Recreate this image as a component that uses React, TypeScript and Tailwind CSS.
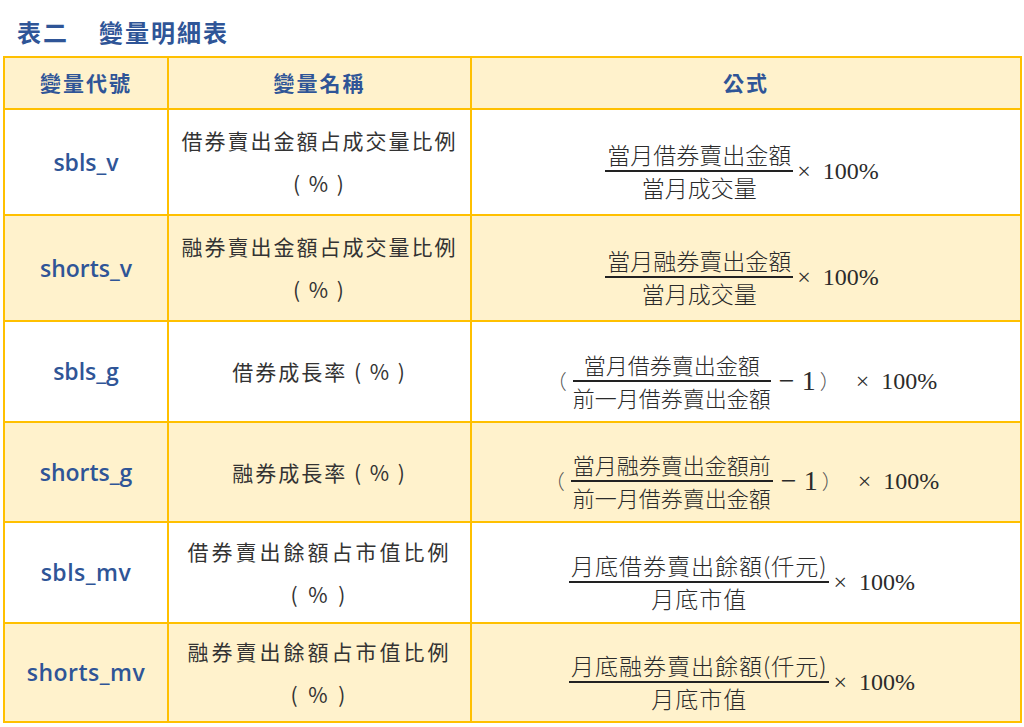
const CJK = "font-['Noto_Sans_CJK_TC','Noto_Sans',sans-serif]";
const SERIF = "font-['Liberation_Serif','Noto_Sans_CJK_TC',serif]";

type Row = {
  code: string;
  name: string[];
  formula: React.ReactNode;
  shaded: boolean;
  h: string;
  tall?: boolean;
};

function Frac({ top, bottom, wide }: { top: string; bottom: string; wide?: boolean }) {
  return (
    <span className={`inline-flex flex-col items-center leading-[31px] ${wide ? "tracking-[1px]" : ""}`}>
      <span className="px-0.5">{top}</span>
      <span className="h-[2px] w-full bg-[#222]" />
      <span>{bottom}</span>
    </span>
  );
}

function Ratio({ top, bottom, wide }: { top: string; bottom: string; wide?: boolean }) {
  return (
    <div className={`flex items-center justify-center ${CJK} text-[23px] font-light text-[#2b2b2b]`}>
      <Frac top={top} bottom={bottom} wide={wide} />
      <span className={`${SERIF} ml-1 whitespace-pre text-[24px]`}>×  100%</span>
    </div>
  );
}

function Growth({ top, bottom }: { top: string; bottom: string }) {
  return (
    <div className={`flex items-center justify-center ${CJK} text-[22px] font-light text-[#2b2b2b]`}>
      <span className="mr-[6px] text-[20px] text-[#555]">（</span>
      <Frac top={top} bottom={bottom} />
      <span className={`${SERIF} ml-2 whitespace-pre text-[28px] font-light`}>− 1</span>
      <span className="ml-1 text-[20px] text-[#555]">）</span>
      <span className={`${SERIF} ml-4 whitespace-pre text-[24px]`}>×  100%</span>
    </div>
  );
}

const rows: Row[] = [
  {
    code: "sbls_v",
    name: ["借券賣出金額占成交量比例", "( % )"],
    formula: <Ratio top="當月借券賣出金額" bottom="當月成交量" />,
    shaded: false,
    h: "h-[106px]",
  },
  {
    code: "shorts_v",
    name: ["融券賣出金額占成交量比例", "( % )"],
    formula: <Ratio top="當月融券賣出金額" bottom="當月成交量" />,
    shaded: true,
    h: "h-[106px]",
  },
  {
    code: "sbls_g",
    name: ["借券成長率 ( % )"],
    formula: <Growth top="當月借券賣出金額" bottom="前一月借券賣出金額" />,
    shaded: false,
    h: "h-[101px]",
  },
  {
    code: "shorts_g",
    name: ["融券成長率 ( % )"],
    formula: <Growth top="當月融券賣出金額前" bottom="前一月借券賣出金額" />,
    shaded: true,
    h: "h-[100px]",
  },
  {
    code: "sbls_mv",
    name: ["借券賣出餘額占市值比例", "( % )"],
    formula: <Ratio top="月底借券賣出餘額(仟元)" bottom="月底市值" wide />,
    shaded: false,
    h: "h-[101px]",
    tall: true,
  },
  {
    code: "shorts_mv",
    name: ["融券賣出餘額占市值比例", "( % )"],
    formula: <Ratio top="月底融券賣出餘額(仟元)" bottom="月底市值" wide />,
    shaded: true,
    h: "h-[99px]",
    tall: true,
  },
];

export default function App() {
  return (
    <div className="h-[727px] w-[1024px] bg-white">
      <h1
        className={`${CJK} flex h-[56px] items-center pl-[17px] pt-[8px] text-[24px] font-bold tracking-[2px] text-[#2f5597]`}
      >
        表二<span className="w-[30px]" />變量明細表
      </h1>
      <table className="ml-[3px] w-[1019px] table-fixed border-collapse">
        <colgroup>
          <col className="w-[164px]" />
          <col className="w-[303px]" />
          <col />
        </colgroup>
        <thead>
          <tr className="h-[52px] bg-[#fff2cc]">
            {["變量代號", "變量名稱", "公式"].map((t) => (
              <th
                key={t}
                className={`${CJK} border-2 border-[#ffc000] text-center text-[21px] font-bold tracking-[2px] text-[#2f5597]`}
              >
                {t}
              </th>
            ))}
          </tr>
        </thead>
        <tbody>
          {rows.map((r) => (
            <tr key={r.code} className={`${r.h} ${r.shaded ? "bg-[#fff2cc]" : "bg-white"}`}>
              <td
                className={`border-2 border-[#ffc000] text-center font-['Open_Sans',sans-serif] font-semibold text-[#2f5597] ${r.tall ? "text-[23px] tracking-[0.5px]" : "text-[23px]"}`}
              >
                {r.code}
              </td>
              <td
                className={`${CJK} border-2 border-[#ffc000] text-center text-[21px] leading-[43px] text-[#333] ${r.tall ? "tracking-[3px]" : "tracking-[2px]"}`}
              >
                {r.name.map((n) => (
                  <div key={n}>{n}</div>
                ))}
              </td>
              <td className="border-2 border-[#ffc000] pr-[8px] pt-[18px]">{r.formula}</td>
            </tr>
          ))}
        </tbody>
      </table>
    </div>
  );
}
